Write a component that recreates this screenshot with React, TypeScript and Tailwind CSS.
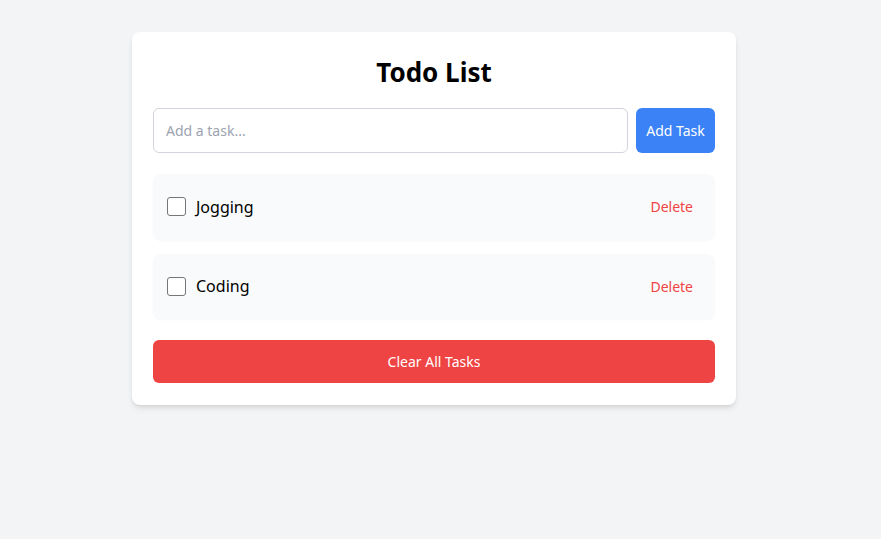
import React from "react";

export default function App() {
  const tasks = ["Jogging", "Coding"];
  return (
    <div
      className="min-h-screen bg-[#f3f4f6] pt-[32px] pr-[13px] flex justify-center items-start"
      style={{ fontFamily: '"Noto Sans", "Open Sans", sans-serif' }}
    >
      <div className="w-[604px] bg-white rounded-lg shadow-md px-[21px] pt-[22px] pb-[22px]">
        <h1 className="text-center text-[26px] font-bold text-black leading-[36px] mb-[18px]">Todo List</h1>
        <div className="flex gap-[8px]">
          <input
            className="flex-1 h-[45px] border border-[#d1d5db] rounded-md px-[12px] text-[14px] placeholder:text-[#9ca3af] outline-none"
            placeholder="Add a task..."
          />
          <button className="w-[79px] h-[45px] bg-[#3b82f6] text-white rounded-md text-[14px]">Add Task</button>
        </div>
        <div className="mt-[21px] flex flex-col gap-[14px]">
          {tasks.map((t) => (
            <div key={t} className="h-[65.5px] bg-[#f9fafb] rounded-lg shadow-[0_1px_2px_rgba(0,0,0,0.03)] flex items-center px-[14px]">
              <span className="w-[19px] h-[19px] border border-[#767676] rounded-[3px] bg-white" />
              <span className="ml-[10px] text-[16px] text-black">{t}</span>
              <button className="ml-auto mr-[8px] px-[0px] text-[14px] text-[#ef4444]">Delete</button>
            </div>
          ))}
        </div>
        <button className="mt-[21px] w-full h-[43px] bg-[#ef4444] text-white rounded-md text-[14px]">Clear All Tasks</button>
      </div>
    </div>
  );
}
